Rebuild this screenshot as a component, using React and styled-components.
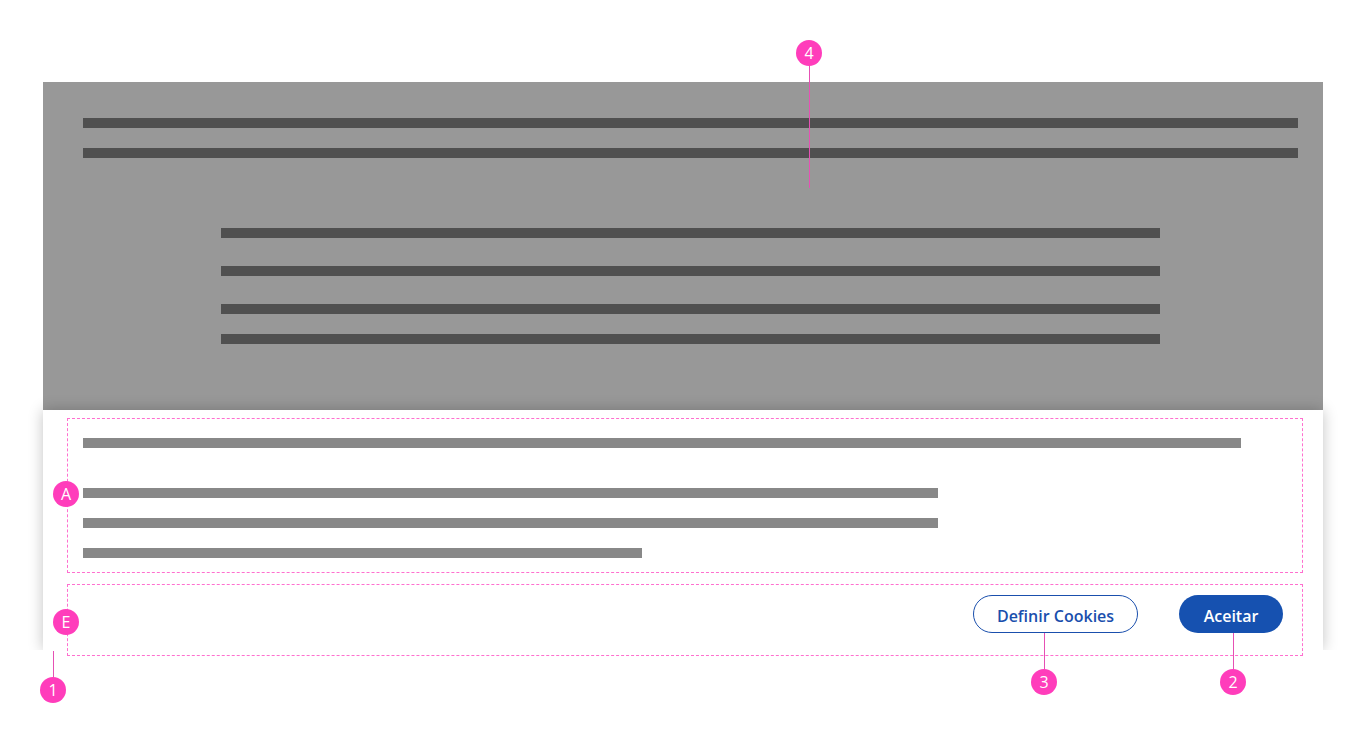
import styled, { createGlobalStyle } from 'styled-components';

const GlobalStyle = createGlobalStyle`
    html, body {
        margin: 0;
        padding: 0;
        background: #ffffff;
        font-family: 'Open Sans', 'Liberation Sans', sans-serif;
    }
`;

const App = () => {
    return (
        <>
            <GlobalStyle />
            <Page>
                <Frame>
                    <Backdrop>
                        <Bar tone='dark' />
                        <Bar tone='dark' />
                        <CenterBlock>
                            <Bar tone='dark' />
                            <Bar tone='dark' gap={28} />
                            <Bar tone='dark' gap={28} />
                            <Bar tone='dark' gap={20} />
                        </CenterBlock>
                    </Backdrop>
                    <Banner>
                        <Zone height={155}>
                            <Bar tone='light' width={1158} />
                            <Bar tone='light' width={855} gap={40} />
                            <Bar tone='light' width={855} gap={20} />
                            <Bar tone='light' width={559} gap={20} />
                        </Zone>
                        <Zone height={72} actions>
                            <OutlineButton>Definir Cookies</OutlineButton>
                            <FilledButton>Aceitar</FilledButton>
                        </Zone>
                    </Banner>
                </Frame>

                {/* annotation layer */}
                <Leader x={809} y={53} h={135} />
                <Marker x={809} y={53}>4</Marker>
                <Marker x={66} y={494}>A</Marker>
                <Marker x={66} y={622}>E</Marker>
                <Leader x={53} y={651} h={30} />
                <Marker x={53} y={690}>1</Marker>
                <Leader x={1044} y={633} h={40} />
                <Marker x={1044} y={682}>3</Marker>
                <Leader x={1233} y={633} h={40} />
                <Marker x={1233} y={682}>2</Marker>
            </Page>
        </>
    );
};

// styled-component Section
const Page = styled.div`
    position: relative;
    width: 1363px;
    height: 744px;
    padding: 82px 0 0 43px;
    box-sizing: border-box;
    overflow: hidden;
`;

const Frame = styled.div`
    width: 1280px;
    display: flex;
    flex-direction: column;
`;

const Backdrop = styled.div`
    height: 328px;
    box-sizing: border-box;
    padding: 36px 25px 0 40px;
    background: #989898;
    display: flex;
    flex-direction: column;
    gap: 20px;
`;

const CenterBlock = styled.div`
    width: 939px;
    margin: 50px 0 0 138px;
    display: flex;
    flex-direction: column;
`;

const Bar = styled.div`
    height: 10px;
    flex-shrink: 0;
    width: ${({ width }) => (width ? `${width}px` : '100%')};
    margin-top: ${({ gap }) => (gap ? `${gap}px` : '0')};
    background: ${({ tone }) => (tone === 'dark' ? '#505050' : '#888888')};
`;

const Banner = styled.div`
    position: relative;
    isolation: isolate;
    height: 240px;
    box-sizing: border-box;
    padding: 8px 20px 0 24px;
    background: #ffffff;
    display: flex;
    flex-direction: column;
    gap: 11px;

    &::before {
        content: '';
        position: absolute;
        inset: 0;
        z-index: -1;
        box-shadow: 0 0 14px rgba(0, 0, 0, 0.24);
        clip-path: inset(-30px -30px 0 -30px);
    }
`;

const Zone = styled.div`
    height: ${({ height }) => height}px;
    flex-shrink: 0;
    box-sizing: border-box;
    border: 1px dashed #ff6fcf;
    display: flex;
    ${({ actions }) =>
        actions
            ? `
        flex-direction: row;
        justify-content: flex-end;
        align-items: flex-start;
        gap: 41px;
        padding: 10px 19px 0 0;
    `
            : `
        flex-direction: column;
        padding: 19px 0 0 15px;
    `}
`;

const ButtonBase = styled.button`
    height: 38px;
    padding: 3px 0 0;
    box-sizing: border-box;
    border-radius: 19px;
    font-family: 'Open Sans', 'Liberation Sans', sans-serif;
    font-size: 16px;
    font-weight: 600;
    display: flex;
    align-items: center;
    justify-content: center;
    cursor: pointer;
`;

const OutlineButton = styled(ButtonBase)`
    width: 165px;
    border: 1px solid #1a4fad;
    background: #ffffff;
    color: #1a4fad;
`;

const FilledButton = styled(ButtonBase)`
    width: 104px;
    border: none;
    background: #1651b0;
    color: #ffffff;
`;

const Marker = styled.div`
    position: absolute;
    left: ${({ x }) => x - 13}px;
    top: ${({ y }) => y - 13}px;
    width: 26px;
    height: 26px;
    border-radius: 50%;
    background: #ff3dbb;
    color: #ffffff;
    font-family: 'Open Sans', 'Liberation Sans', sans-serif;
    font-size: 16px;
    line-height: 26px;
    text-align: center;
`;

const Leader = styled.div`
    position: absolute;
    left: ${({ x }) => x}px;
    top: ${({ y }) => y}px;
    width: 1px;
    height: ${({ h }) => h}px;
    background: #e650b4;
`;

export default App;
